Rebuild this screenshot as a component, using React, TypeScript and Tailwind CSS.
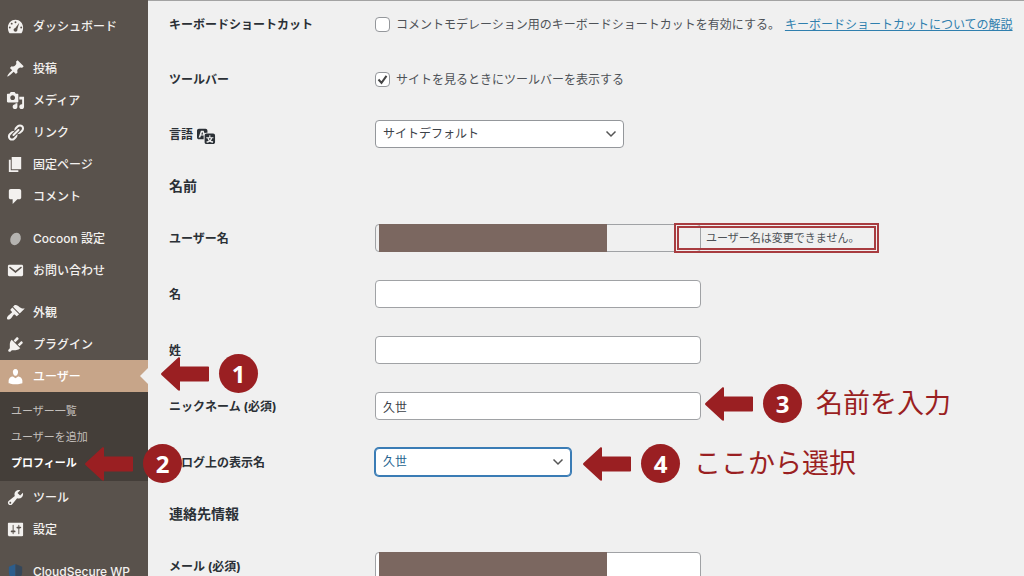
import type { ReactNode } from 'react';
import clsx from 'clsx';

const ICONS = {
    dashboard:
        'M3.76 17h12.48c1.34-1.63 1.76-3.73 1.76-6 0-4.42-3.58-8-8-8s-8 3.58-8 8c0 2.27.42 4.37 1.76 6zM9 5.5a1 1 0 1 1 2 0 1 1 0 1 1-2 0zM5 7a1 1 0 1 1 2 0 1 1 0 1 1-2 0zM3 11a1 1 0 1 1 2 0 1 1 0 1 1-2 0zM15 11a1 1 0 1 1 2 0 1 1 0 1 1-2 0zM8 13.5c0-1 .8-1.9 1.8-2L14 6l-2 6.6c.3 1.6-.6 2.9-2 2.9s-2-.9-2-2z',
    post: 'M10.44 3.02l1.82-1.82 6.36 6.35-1.83 1.82c-1.05-.68-2.48-.57-3.41.36l-.75.75c-.92.93-1.04 2.35-.35 3.41l-1.83 1.82-2.41-2.41-2.8 2.79c-.42.42-3.38 2.71-3.8 2.29s1.86-3.39 2.28-3.81l2.79-2.79L4.1 9.36l1.83-1.82c1.05.69 2.48.57 3.4-.36l.75-.75c.93-.92 1.05-2.35.36-3.41z',
    media: 'M13 11V4c0-.55-.45-1-1-1h-1.67L9 1H5L3.67 3H2c-.55 0-1 .45-1 1v7c0 .55.45 1 1 1h10c.55 0 1-.45 1-1zM7 4.5c1.38 0 2.5 1.12 2.5 2.5S8.38 9.5 7 9.5 4.5 8.38 4.5 7 5.62 4.5 7 4.5zM14 6h5v10.5c0 1.38-1.12 2.5-2.5 2.5S14 17.88 14 16.5s1.12-2.5 2.5-2.5c.17 0 .34.02.5.05V9h-3V6zm-4 8.05V13h2v3.5c0 1.38-1.12 2.5-2.5 2.5S7 17.88 7 16.5 8.12 14 9.5 14c.17 0 .34.02.5.05z',
    links: 'M17.74 2.76c1.68 1.69 1.68 4.41 0 6.1l-1.53 1.52c-1.12 1.12-2.7 1.47-4.14 1.09l2.62-2.61.76-.77.76-.76c.84-.84.84-2.2 0-3.04-.84-.85-2.2-.85-3.04 0l-.77.76-3.38 3.38c-.37-1.44-.02-3.02 1.1-4.14l1.52-1.53c1.69-1.68 4.42-1.68 6.1 0zM8.59 13.43l5.34-5.34c.42-.42.42-1.1 0-1.52-.44-.43-1.13-.39-1.53 0l-5.33 5.34c-.42.42-.42 1.1 0 1.52.44.43 1.13.39 1.52 0zm-.76 2.29l4.14-4.15c.38 1.44.03 3.02-1.09 4.14l-1.52 1.53c-1.69 1.68-4.41 1.68-6.1 0-1.68-1.68-1.68-4.42 0-6.1l1.53-1.52c1.12-1.12 2.7-1.47 4.14-1.1l-4.14 4.15c-.85.84-.85 2.2 0 3.05.84.84 2.2.84 3.04 0z',
    page: 'M6 15V2h10v13H6zm-1 1h8v2H3V5h2v11z',
    comments: 'M5 2h9c1.1 0 2 .9 2 2v7c0 1.1-.9 2-2 2h-2l-5 5v-5H5c-1.1 0-2-.9-2-2V4c0-1.1.9-2 2-2z',
    email: 'M3.5 4h13c.83 0 1.5.67 1.5 1.5v9c0 .83-.67 1.5-1.5 1.5h-13c-.83 0-1.5-.67-1.5-1.5v-9C2 4.67 2.67 4 3.5 4zM3.6 6.2c-.4.4-.3.9.1 1.2L10 12.6l6.3-5.2c.4-.3.5-.8.1-1.2s-.8-.3-1.2 0L10 10.3 4.8 6.2c-.4-.3-.8-.4-1.2 0z',
    appearance:
        'M14.48 11.06L7.41 3.99l1.5-1.5c.5-.56 2.3-.47 3.51.32 1.21.8 1.43 1.28 2.91 2.1 1.18.64 2.45 1.26 4.45.85zm-.71.71L6.7 4.7 4.93 6.47c-.39.39-.39 1.02 0 1.41l1.06 1.06c.39.39.39 1.03 0 1.42-.6.6-1.43 1.11-2.21 1.69-.35.26-.7.53-1.01.84C1.43 14.23.4 16.08 1.4 17.07c.99 1 2.84-.03 4.18-1.36.31-.31.58-.66.85-1.02.57-.78 1.08-1.61 1.69-2.21.39-.39 1.02-.39 1.41 0l1.06 1.06c.39.39 1.02.39 1.41 0z',
    plugins:
        'M13.11 4.36L9.87 7.6 8 5.73l3.24-3.24c.35-.34 1.05-.2 1.56.32.52.51.66 1.21.31 1.55zm-8 1.77l.91-1.12 9.01 9.01-1.19.84c-.71.71-2.63 1.16-3.82 1.16H6.14L4.9 17.26c-.59.59-1.54.59-2.12 0-.59-.58-.59-1.53 0-2.12l1.24-1.24v-3.88c0-1.13.4-3.19 1.09-3.89zm7.26 3.97l3.24-3.24c.34-.35 1.04-.21 1.55.31.52.51.66 1.21.31 1.55l-3.24 3.25z',
    users: 'M10 9.25c-2.27 0-2.73-3.44-2.73-3.44C7 4.02 7.82 2 9.97 2c2.16 0 2.98 2.02 2.71 3.81 0 0-.41 3.44-2.68 3.44zm0 2.57L12.72 10c2.39 0 4.52 2.33 4.52 4.53v2.49s-3.65 1.13-7.24 1.13c-3.65 0-7.24-1.13-7.24-1.13v-2.49c0-2.25 1.94-4.48 4.47-4.48z',
    tools: 'M16.68 9.77c-1.34 1.34-3.3 1.67-4.95.99l-5.41 6.52c-.99.99-2.59.99-3.58 0s-.99-2.59 0-3.57l6.52-5.42c-.68-1.65-.35-3.61.99-4.95 1.28-1.28 3.12-1.62 4.72-1.06l-2.89 2.89 2.82 2.82 2.86-2.87c.53 1.58.18 3.39-1.08 4.65zM3.81 16.21c.4.39 1.04.39 1.43 0 .4-.4.4-1.04 0-1.43-.39-.4-1.03-.4-1.43 0-.39.39-.39 1.03 0 1.43z',
    settings:
        'M18 16V4c0-.55-.45-1-1-1H3c-.55 0-1 .45-1 1v12c0 .55.45 1 1 1h14c.55 0 1-.45 1-1zM8 11h1c.55 0 1 .45 1 1s-.45 1-1 1H8v1.5c0 .28-.22.5-.5.5s-.5-.22-.5-.5V13H6c-.55 0-1-.45-1-1s.45-1 1-1h1V5.5c0-.28.22-.5.5-.5s.5.22.5.5V11zm5-2h-1c-.55 0-1-.45-1-1s.45-1 1-1h1V5.5c0-.28.22-.5.5-.5s.5.22.5.5V7h1c.55 0 1 .45 1 1s-.45 1-1 1h-1v5.5c0 .28-.22.5-.5.5s-.5-.22-.5-.5V9z',
    translation:
        'M11 7H9.49c-.63 0-1.25.3-1.59.7L7 5H4.13l-2.39 7h1.69l.74-2H7v4H2c-1.1 0-2-.9-2-2V5c0-1.1.9-2 2-2h7c1.1 0 2 .9 2 2v2zM6.51 9H4.49l1-2.93zM10 8h7c1.1 0 2 .9 2 2v7c0 1.1-.9 2-2 2h-7c-1.1 0-2-.9-2-2v-7c0-1.1.9-2 2-2zm7.25 5v-1.08h-3.17V9.75h-1.16v2.17H9.75V13h1.28c.11.85.56 1.85 1.28 2.62-.87.36-1.89.62-2.31.62-.01.02.22.97.2 1.46.84 0 2.21-.5 3.28-1.15 1.09.65 2.48 1.15 3.34 1.15-.02-.49.2-1.44.2-1.46-.43 0-1.49-.27-2.38-.63.7-.77 1.14-1.77 1.25-2.61h1.36zm-3.81 1.93c-.5-.46-.85-1.13-1.01-1.93h2.09c-.17.8-.51 1.47-1 1.93l-.04.03s-.03-.02-.04-.03z',
};

type IconName = keyof typeof ICONS;

function Dashicon({ name }: { name: IconName }) {
    return (
        <svg viewBox="0 0 20 20" className="size-[19px] shrink-0 fill-current" aria-hidden="true">
            <path fillRule="evenodd" d={ICONS[name]} />
        </svg>
    );
}

function CocoonIcon() {
    return (
        <svg viewBox="0 0 20 20" className="size-[19px] shrink-0" aria-hidden="true">
            <ellipse cx="10" cy="10.5" rx="5.3" ry="6.8" fill="#b5b3b0" transform="rotate(25 10 10.5)" />
        </svg>
    );
}

function ShieldIcon() {
    return (
        <svg viewBox="0 0 20 20" className="size-[19px] shrink-0" aria-hidden="true">
            <path d="M10 2 3 5v6c0 4 3 6.5 7 8z" fill="#2c5d8c" />
            <path d="M10 2l7 3v6c0 4-3 6.5-7 8z" fill="#35475a" />
        </svg>
    );
}

type CalloutProps = {
    step: number;
    className: string;
    children?: ReactNode;
};

function Callout({ step, className, children }: CalloutProps) {
    return (
        <div
            className={clsx(
                'pointer-events-none absolute z-10 flex h-[39px] items-center font-normal whitespace-nowrap text-[#9a1f22]',
                className,
            )}
        >
            <svg viewBox="0 0 48 34" className="h-[34px] w-12 shrink-0 fill-current" aria-hidden="true">
                <path d="M.5 16 17 .8c1-.9 2-.5 2 .8V9.500h28.200c.5 0 .8.3.8.8v13.400c0 .5-.3.8-.8.8H19v8c0 1.300-1 1.700-2 .8L.5 18c-.6-.6-.6-1.400 0-2z" />
            </svg>
            <span className="ml-[10px] flex size-[39px] shrink-0 items-center justify-center rounded-full bg-[#9a1f22] font-['Noto_Sans',sans-serif] text-2xl font-bold text-white">
                {step}
            </span>
            {children && <span className="ml-[14px] text-[27px] leading-9">{children}</span>}
        </div>
    );
}

type MenuItemProps = {
    icon: ReactNode;
    label: string;
    current?: boolean;
    children?: ReactNode;
};

function MenuItem({ icon, label, current, children }: MenuItemProps) {
    return (
        <li className="relative">
            <a
                href="#"
                className={clsx(
                    'flex h-8 items-center gap-2 whitespace-nowrap pl-[6px] font-medium text-[#f3f1ef]',
                    current && 'bg-[#c7a589] text-white',
                )}
            >
                {icon}
                <span className="pt-0.5">{label}</span>
            </a>
            {current && (
                <svg viewBox="0 0 8 16" className="absolute top-2 right-0 h-4 w-2 fill-[#f0f0f0]" aria-hidden="true">
                    <path d="M8 0v16L0 8z" />
                </svg>
            )}
            {children}
        </li>
    );
}

function Sidebar() {
    return (
        <nav className="relative z-10 w-[148px] shrink-0 bg-[#59524c] pt-[10px]">
            <ul className="flex flex-col gap-[10px]">
                <li>
                    <ul>
                        <MenuItem icon={<Dashicon name="dashboard" />} label="ダッシュボード" />
                    </ul>
                </li>
                <li>
                    <ul>
                        <MenuItem icon={<Dashicon name="post" />} label="投稿" />
                        <MenuItem icon={<Dashicon name="media" />} label="メディア" />
                        <MenuItem icon={<Dashicon name="links" />} label="リンク" />
                        <MenuItem icon={<Dashicon name="page" />} label="固定ページ" />
                        <MenuItem icon={<Dashicon name="comments" />} label="コメント" />
                    </ul>
                </li>
                <li>
                    <ul>
                        <MenuItem icon={<CocoonIcon />} label="Cocoon 設定" />
                        <MenuItem icon={<Dashicon name="email" />} label="お問い合わせ" />
                    </ul>
                </li>
                <li>
                    <ul>
                        <MenuItem icon={<Dashicon name="appearance" />} label="外観" />
                        <MenuItem icon={<Dashicon name="plugins" />} label="プラグイン" />
                        <MenuItem icon={<Dashicon name="users" />} label="ユーザー" current>
                            <Callout step={1} className="-top-1.5 left-[161px]" />
                            <ul className="bg-[#443e39] pt-[6px] pb-[5px] text-[11px] text-[#c3bfbb]">
                                <li className="flex h-[26px] items-center pl-[11px]">
                                    <a href="#">ユーザー一覧</a>
                                </li>
                                <li className="flex h-[26px] items-center pl-[11px]">
                                    <a href="#">ユーザーを追加</a>
                                </li>
                                <li className="relative flex h-[26px] items-center pl-[11px] font-bold text-white">
                                    <a href="#" aria-current="page">
                                        プロフィール
                                    </a>
                                    <Callout step={2} className="-top-1.5 left-[85px]" />
                                </li>
                            </ul>
                        </MenuItem>
                        <MenuItem icon={<Dashicon name="tools" />} label="ツール" />
                        <MenuItem icon={<Dashicon name="settings" />} label="設定" />
                    </ul>
                </li>
                <li>
                    <ul>
                        <MenuItem icon={<ShieldIcon />} label="CloudSecure WP" />
                    </ul>
                </li>
            </ul>
        </nav>
    );
}

type RowProps = {
    label: ReactNode;
    htmlFor: string;
    children: ReactNode;
};

function Row({ label, htmlFor, children }: RowProps) {
    return (
        <div className="grid h-7 grid-cols-[206px_1fr] items-center">
            <label htmlFor={htmlFor} className="flex items-center gap-1 pt-0.5 font-bold text-[#2b3036]">
                {label}
            </label>
            <div className="flex items-center whitespace-nowrap">{children}</div>
        </div>
    );
}

function Checkbox({ id, label, defaultChecked }: { id: string; label: string; defaultChecked?: boolean }) {
    return (
        <label htmlFor={id} className="flex items-center gap-[6px]">
            <span className="relative flex size-[15px]">
                <input
                    id={id}
                    type="checkbox"
                    defaultChecked={defaultChecked}
                    className="peer size-[15px] appearance-none rounded border border-[#94979b] bg-white"
                />
                <svg
                    viewBox="0 0 15 15"
                    className="pointer-events-none absolute inset-0 hidden fill-none stroke-[#444] stroke-2 peer-checked:block"
                    aria-hidden="true"
                >
                    <path d="M3.5 7.5 6.5 10.8 11.5 3.8" />
                </svg>
            </span>
            <span className="pt-0.5">{label}</span>
        </label>
    );
}

type TextFieldProps = {
    id: string;
    value?: string;
    disabled?: boolean;
    redacted?: boolean;
    children?: ReactNode;
};

function TextField({ id, value, disabled, redacted, children }: TextFieldProps) {
    return (
        <div className="relative">
            <input
                id={id}
                type="text"
                defaultValue={value}
                disabled={disabled}
                className="block h-7 w-[326px] rounded border border-[#a0a2a5] bg-white px-[7px] text-[#3c4147] disabled:bg-[#f0f0f0]"
            />
            {redacted && <span className="absolute inset-y-0 left-1 w-[228px] bg-[#7b6760]" />}
            {children}
        </div>
    );
}

type SelectFieldProps = {
    id: string;
    option: string;
    className: string;
    children?: ReactNode;
};

function SelectField({ id, option, className, children }: SelectFieldProps) {
    return (
        <div className="relative">
            <select id={id} className={clsx('block h-7 appearance-none rounded border bg-white px-[7px]', className)}>
                <option>{option}</option>
            </select>
            <svg
                viewBox="0 0 12 8"
                className="pointer-events-none absolute top-[10px] right-[7px] h-2 w-3 fill-none stroke-[#555] stroke-[1.5]"
                aria-hidden="true"
            >
                <path d="M1.5 1.5 6 6l4.500-4.500" />
            </svg>
            {children}
        </div>
    );
}

function SectionTitle({ children }: { children: ReactNode }) {
    return <h2 className="my-7 text-sm font-bold text-[#2b3036]">{children}</h2>;
}

export default function App() {
    return (
        <div className="flex h-screen overflow-hidden bg-[#f0f0f0] font-[Inter,'Noto_Sans_CJK_JP',sans-serif] text-xs text-[#4e5257]">
            <Sidebar />
            <main className="min-w-0 flex-1 border-t border-[#a3a3a3] pt-[9px] pl-[21px]">
                <form>
                    <div className="flex flex-col gap-[27px]">
                        <Row label="キーボードショートカット" htmlFor="comment-shortcuts">
                            <Checkbox
                                id="comment-shortcuts"
                                label="コメントモデレーション用のキーボードショートカットを有効にする。"
                            />
                            <a href="#" className="ml-[5px] pt-0.5 text-[#2f7fae] underline">
                                キーボードショートカットについての解説
                            </a>
                        </Row>
                        <Row label="ツールバー" htmlFor="admin-bar">
                            <Checkbox id="admin-bar" label="サイトを見るときにツールバーを表示する" defaultChecked />
                        </Row>
                        <Row
                            label={
                                <>
                                    言語 <Dashicon name="translation" />
                                </>
                            }
                            htmlFor="locale"
                        >
                            <SelectField
                                id="locale"
                                option="サイトデフォルト"
                                className="w-[249px] border-[#94979b] text-[#3c4147]"
                            />
                        </Row>
                    </div>

                    <SectionTitle>名前</SectionTitle>
                    <div className="flex flex-col gap-7">
                        <Row label="ユーザー名" htmlFor="user-login">
                            <TextField id="user-login" disabled redacted />
                            <p className="relative ml-[5px] text-[11px] leading-7">
                                ユーザー名は変更できません。
                                <span className="absolute -inset-y-px -right-5 -left-8 border-[5px] border-double border-[#a83c40]" />
                            </p>
                        </Row>
                        <Row label="名" htmlFor="first-name">
                            <TextField id="first-name" />
                        </Row>
                        <Row label="姓" htmlFor="last-name">
                            <TextField id="last-name" />
                        </Row>
                        <Row label="ニックネーム (必須)" htmlFor="nickname">
                            <TextField id="nickname" value="久世">
                                <Callout step={3} className="-top-2 left-full ml-1">
                                    名前を入力
                                </Callout>
                            </TextField>
                        </Row>
                        <Row label="ブログ上の表示名" htmlFor="display-name">
                            <SelectField
                                id="display-name"
                                option="久世"
                                className="w-[196px] border-[#3a7cb5] text-[#26648f] ring-1 ring-[#3a7cb5]"
                            >
                                <Callout step={4} className="-top-1 left-full ml-3">
                                    ここから選択
                                </Callout>
                            </SelectField>
                        </Row>
                    </div>

                    <SectionTitle>連絡先情報</SectionTitle>
                    <Row label="メール (必須)" htmlFor="email">
                        <TextField id="email" redacted />
                    </Row>
                </form>
            </main>
        </div>
    );
}
